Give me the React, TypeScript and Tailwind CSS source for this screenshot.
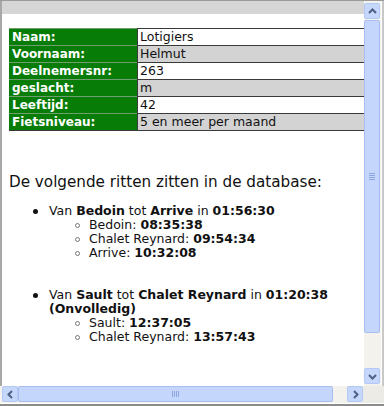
import React from "react";

const rows: [string, string][] = [
  ["Naam:", "Lotigiers"],
  ["Voornaam:", "Helmut"],
  ["Deelnemersnr:", "263"],
  ["geslacht:", "m"],
  ["Leeftijd:", "42"],
  ["Fietsniveau:", "5 en meer per maand"],
];

function Chevron({ dir }: { dir: "up" | "down" | "left" | "right" }) {
  const pts = {
    up: "3,8 6.5,4.5 10,8",
    down: "3,5 6.5,8.5 10,5",
    left: "8,3 4.5,6.5 8,10",
    right: "5,3 8.5,6.5 5,10",
  }[dir];
  return (
    <svg width="13" height="13" viewBox="0 0 13 13">
      <polyline points={pts} fill="none" stroke="#4d6185" strokeWidth="2" />
    </svg>
  );
}

function ArrowButton({ dir }: { dir: "up" | "down" | "left" | "right" }) {
  return (
    <div className="flex h-[16px] w-[16px] items-center justify-center rounded-[2px] border border-[#b4c8f6] bg-[#c6d7fc]">
      <Chevron dir={dir} />
    </div>
  );
}

function Bullet({ children }: { children: React.ReactNode }) {
  return (
    <div className="flex items-start">
      <span className="ml-[31px] mt-[5px] h-[5px] w-[5px] shrink-0 rounded-full bg-[#111]" />
      <div className="ml-[11px]">{children}</div>
    </div>
  );
}

function Sub({ children }: { children: React.ReactNode }) {
  return (
    <div className="flex items-start">
      <span className="ml-[73px] mt-[5px] h-[5px] w-[5px] shrink-0 rounded-full border border-[#777]" />
      <div className="ml-[9px]">{children}</div>
    </div>
  );
}

export default function App() {
  return (
    <div className="flex h-[406px] w-[384px] flex-col overflow-hidden border-t border-[#9a9a9a] bg-[#d4d4d4] font-['DejaVu_Sans','Verdana',sans-serif] text-[#111]">
      <div className="flex h-[385px]">
        {/* page */}
        <div className="flex w-[364px] flex-col border-l-2 border-[#a8a8a8]">
          <div className="h-[13px] bg-[#d6d6d6]" />
          <div className="flex-1 overflow-hidden bg-white">
            <div className="ml-[7px] mt-[14px] w-[380px] border-b border-[#3a3a3a]">
              {rows.map(([label, value], i) => (
                <div key={label} className="flex h-[17px]">
                  <div className="w-[128px] border-t border-[#6f9f6f] bg-[#077c07] pl-[3px] text-[12px] font-bold leading-[16px] text-white">
                    {label}
                  </div>
                  <div
                    className={
                      i % 2 === 0
                        ? "flex-1 border-t border-l border-[#3a3a3a] bg-white pl-[2px] text-[12.5px] leading-[16px]"
                        : "flex-1 border-t border-l border-[#3a3a3a] bg-[#d3d3d3] pl-[2px] text-[12.5px] leading-[16px]"
                    }
                  >
                    {value}
                  </div>
                </div>
              ))}
            </div>

            <h1 className="ml-[7px] mt-[42px] text-[15.2px] leading-[18px]">
              De volgende ritten zitten in de database:
            </h1>

            <div className="mt-[13px] text-[12.5px] leading-[14px]">
              <Bullet>
                Van <b>Bedoin</b> tot <b>Arrive</b> in <b>01:56:30</b>
              </Bullet>
              <Sub>
                Bedoin: <b>08:35:38</b>
              </Sub>
              <Sub>
                Chalet Reynard: <b>09:54:34</b>
              </Sub>
              <Sub>
                Arrive: <b>10:32:08</b>
              </Sub>

              <div className="mt-[28px]">
                <Bullet>
                  Van <b>Sault</b> tot <b>Chalet Reynard</b> in <b>01:20:38</b>
                  <br />
                  <b>(Onvolledig)</b>
                </Bullet>
                <Sub>
                  Sault: <b>12:37:05</b>
                </Sub>
                <Sub>
                  Chalet Reynard: <b>13:57:43</b>
                </Sub>
              </div>
            </div>
          </div>
        </div>

        {/* vertical scrollbar */}
        <div className="flex w-[17px] flex-col bg-[#f3f2ed] pt-[2px]">
          <ArrowButton dir="up" />
          <div className="relative mt-[1px] flex h-[313px] w-[16px] items-center justify-center rounded-[2px] border border-[#a9bdf0] bg-[#c5d6fc]">
            <div className="flex flex-col gap-[1px]">
              <span className="h-[1px] w-[6px] bg-[#8ea6e0]" />
              <span className="h-[1px] w-[6px] bg-[#8ea6e0]" />
              <span className="h-[1px] w-[6px] bg-[#8ea6e0]" />
              <span className="h-[1px] w-[6px] bg-[#8ea6e0]" />
            </div>
          </div>
          <div className="flex-1" />
          <ArrowButton dir="down" />
          <div className="h-[2px]" />
        </div>
        <div className="w-[3px] border-l border-[#fdfdfd] bg-[#c8c8c8]" />
      </div>

      {/* horizontal scrollbar */}
      <div className="flex h-[17px] bg-[#f3f2ed] pl-[2px]">
        <ArrowButton dir="left" />
        <div className="flex h-[16px] w-[315px] items-center justify-center rounded-[2px] border border-[#a9bdf0] bg-[#c5d6fc]">
          <div className="flex gap-[1px]">
            <span className="h-[6px] w-[1px] bg-[#8ea6e0]" />
            <span className="h-[6px] w-[1px] bg-[#8ea6e0]" />
            <span className="h-[6px] w-[1px] bg-[#8ea6e0]" />
            <span className="h-[6px] w-[1px] bg-[#8ea6e0]" />
          </div>
        </div>
        <div className="w-[14px]" />
        <ArrowButton dir="right" />
        <div className="flex-1 bg-[#ecebe6]" />
      </div>
      <div className="flex-1 border-t border-[#ffffff] bg-[#8c8c8c]" />
    </div>
  );
}
